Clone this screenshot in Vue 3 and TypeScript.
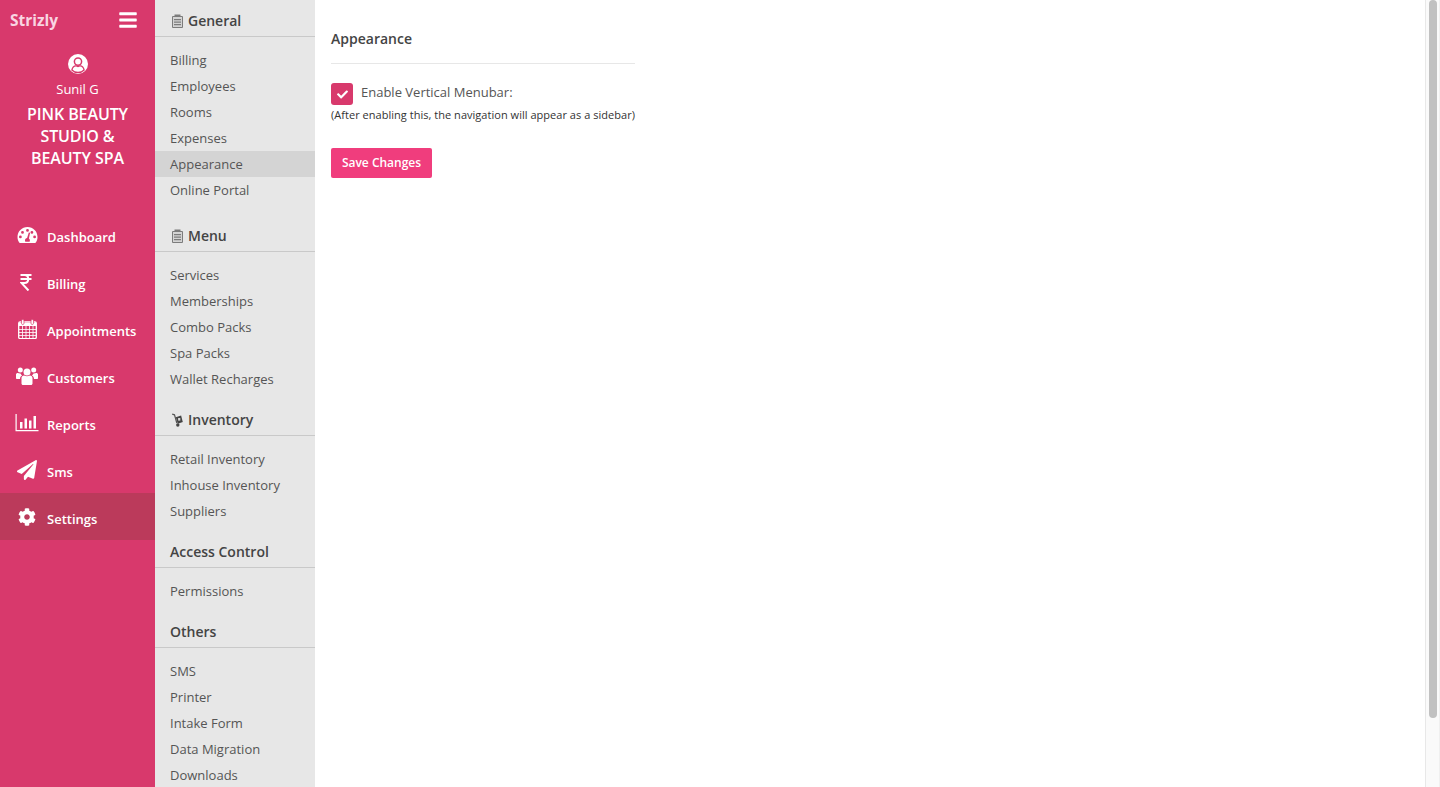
<script setup lang="ts">
// Пункты главного меню
const navItems = [
  { id: 'dashboard', label: 'Dashboard' },
  { id: 'billing', label: 'Billing' },
  { id: 'appointments', label: 'Appointments' },
  { id: 'customers', label: 'Customers' },
  { id: 'reports', label: 'Reports' },
  { id: 'sms', label: 'Sms' },
  { id: 'settings', label: 'Settings', active: true },
]

// Разделы настроек
const sections = [
  { title: 'General', icon: 'clipboard', tall: true, items: ['Billing', 'Employees', 'Rooms', 'Expenses', 'Appearance', 'Online Portal'] },
  { title: 'Menu', icon: 'clipboard', items: ['Services', 'Memberships', 'Combo Packs', 'Spa Packs', 'Wallet Recharges'] },
  { title: 'Inventory', icon: 'dolly', items: ['Retail Inventory', 'Inhouse Inventory', 'Suppliers'] },
  { title: 'Access Control', items: ['Permissions'] },
  { title: 'Others', items: ['SMS', 'Printer', 'Intake Form', 'Data Migration', 'Downloads'] },
]
</script>

<template>
  <div class="page">
    <aside class="sidebar">
      <div class="brand">
        <span class="logo">Strizly</span>
        <svg class="burger" viewBox="0 0 448 512" fill="currentColor"><path d="M16 132h416c8.837 0 16-7.163 16-16V76c0-8.837-7.163-16-16-16H16C7.163 60 0 67.163 0 76v40c0 8.837 7.163 16 16 16zm0 160h416c8.837 0 16-7.163 16-16v-40c0-8.837-7.163-16-16-16H16c-8.837 0-16 7.163-16 16v40c0 8.837 7.163 16 16 16zm0 160h416c8.837 0 16-7.163 16-16v-40c0-8.837-7.163-16-16-16H16c-8.837 0-16 7.163-16 16v40c0 8.837 7.163 16 16 16z" /></svg>
      </div>
      <div class="profile">
        <svg class="avatar" viewBox="0 0 20 20">
          <circle cx="10" cy="10" r="10" fill="#fff" />
          <circle cx="10" cy="7.6" r="3.6" fill="none" stroke="#d8396c" stroke-width="1.5" />
          <path d="M3.9 16c.6-3 2.6-4.2 3.9-4.2.8.5 1.4.7 2.2.7s1.400-.2 2.200-.7c1.300 0 3.300 1.200 3.900 4.200-1.500 1.600-3.700 2.500-6.100 2.500S5.400 17.600 3.900 16z" fill="none" stroke="#d8396c" stroke-width="1.300" />
        </svg>
        <div class="user-name">Sunil G</div>
        <div class="salon-name">PINK BEAUTY STUDIO &amp; BEAUTY SPA</div>
      </div>

      <nav class="main-nav">
        <a v-for="item in navItems" :key="item.id" class="nav-item" :class="{ active: item.active }">
          <span class="nav-icon">
            <svg v-if="item.id === 'dashboard'" width="21" height="18" viewBox="0 0 21 18">
              <path fill="#fff" fill-rule="evenodd" d="M10.500 1C4.900 1 .5 5.400.5 11c0 2 .5 3.800 1.500 5.300.2.400.6.700 1 .7h15c.4 0 .8-.3 1-.7 1-1.500 1.500-3.300 1.500-5.300 0-5.600-4.400-10-10-10zM10.500 3a1.400 1.400 0 1 1 0 2.800 1.400 1.400 0 0 1 0-2.800zM5.500 5a1.400 1.400 0 1 1 0 2.800 1.400 1.400 0 0 1 0-2.800zM3.400 9.500a1.400 1.400 0 1 1 0 2.800 1.400 1.400 0 0 1 0-2.800zM17.600 9.500a1.400 1.400 0 1 1 0 2.800 1.400 1.400 0 0 1 0-2.800zM14.900 5a1.400 1.400 0 1 1 0 2.800 1.400 1.400 0 0 1 0-2.800zM11.800 6.500l1.300.3-1.200 5.700c.6.400 1 1.100 1 1.900 0 .5-.1 1-.4 1.300H8.400c-.3-.3-.4-.8-.4-1.300 0-1.200.9-2.200 2.100-2.400z" />
            </svg>
            <svg v-else-if="item.id === 'billing'" class="rupee" width="12" height="18" viewBox="0 0 12 18">
              <path fill="none" stroke="#fff" stroke-width="2" d="M.5 2h11M.5 6h11M1 2h3.500c5 0 5 8 0 8H1.500l7 7.500" />
            </svg>
            <svg v-else-if="item.id === 'appointments'" width="19" height="20" viewBox="0 0 19 20">
              <path fill="none" stroke="#fff" stroke-width="1.300" d="M2 3h15a1.300 1.300 0 0 1 1.300 1.300v14a1.300 1.300 0 0 1-1.300 1.300H2A1.300 1.300 0 0 1 .7 18.300v-14A1.300 1.300 0 0 1 2 3z" />
              <path fill="#fff" d="M1 4h17v3H1z" />
              <path fill="none" stroke="#fff" stroke-width=".8" d="M1 10.500h17M1 13.500h17M1 16.500h17M4.500 7v12M8 7v12M11.500 7v12M15 7v12" />
              <rect x="3.500" y=".5" width="2.500" height="5" rx="1.200" fill="#fff" stroke="#d8396c" stroke-width=".7" />
              <rect x="13" y=".5" width="2.500" height="5" rx="1.200" fill="#fff" stroke="#d8396c" stroke-width=".7" />
            </svg>
            <svg v-else-if="item.id === 'customers'" width="22" height="18" viewBox="0 0 22 18" fill="#fff">
              <circle cx="11" cy="5" r="3.500" />
              <circle cx="4.300" cy="3" r="2.500" />
              <circle cx="17.700" cy="3" r="2.500" />
              <path d="M5.500 11c0-1.500 1.200-2.500 2.500-2.500.9.500 1.900.8 3 .8s2.100-.3 3-.8c1.300 0 2.500 1 2.500 2.500v5.500c0 .8-.7 1.500-1.500 1.500H7c-.8 0-1.500-.7-1.500-1.500z" />
              <path d="M0 7.500C0 6.500.9 6 1.800 6c.8.300 1.700.6 2.700.5.300.8.900 1.500 1.600 2C4.900 9 4 10.300 4 12H1c-.6 0-1-.4-1-1zM22 7.500c0-1-.9-1.500-1.800-1.500-.8.300-1.700.6-2.700.5-.3.800-.9 1.500-1.600 2 1.200.5 2.100 1.800 2.100 3.500h3c.6 0 1-.4 1-1z" />
            </svg>
            <svg v-else-if="item.id === 'reports'" width="24" height="18" viewBox="0 0 24 18" fill="#fff">
              <path d="M.5 0h1.200v16H23.500v1.200H.5z" />
              <rect x="5" y="8" width="2.500" height="6.500" />
              <rect x="9.500" y="4.500" width="2.500" height="10" />
              <rect x="14" y="6.500" width="2.500" height="8" />
              <rect x="18.500" y="2" width="2.500" height="12.500" />
            </svg>
            <svg v-else-if="item.id === 'sms'" width="20" height="20" viewBox="0 0 512 512" fill="#fff"><path d="M476 3.200L12.500 270.600c-18.100 10.400-15.800 35.600 2.200 43.200L121 358.400l287.300-253.200c5.500-4.900 13.300 2.600 8.600 8.300L176 407v80.500c0 23.600 28.500 32.900 42.500 15.800L282 426l124.600 52.200c14.200 6 30.400-2.900 33-18.200l72-432C515 7.800 493.300-6.800 476 3.200z" /></svg>
            <svg v-else width="18" height="18" viewBox="0 0 512 512" fill="#fff"><path d="M487.400 315.700l-42.600-24.600c4.300-23.200 4.300-47 0-70.200l42.600-24.600c4.900-2.800 7.100-8.600 5.500-14-11.100-35.600-30-67.800-54.700-94.600-3.800-4.100-10-5.100-14.800-2.300L380.800 110c-17.900-15.400-38.500-27.300-60.800-35.100V25.800c0-5.600-3.900-10.500-9.400-11.700-36.700-8.200-74.300-7.800-109.200 0-5.500 1.200-9.400 6.100-9.400 11.700V75c-22.200 7.900-42.800 19.800-60.800 35.100L88.700 85.500c-4.900-2.800-11-1.900-14.800 2.300-24.700 26.700-43.600 58.900-54.700 94.600-1.700 5.400.6 11.200 5.500 14L67.300 221c-4.300 23.200-4.300 47 0 70.200l-42.600 24.600c-4.900 2.800-7.100 8.600-5.500 14 11.100 35.600 30 67.800 54.700 94.600 3.800 4.100 10 5.100 14.800 2.300l42.600-24.600c17.900 15.400 38.500 27.300 60.800 35.100v49.200c0 5.600 3.900 10.500 9.400 11.700 36.700 8.200 74.300 7.800 109.200 0 5.500-1.200 9.400-6.100 9.400-11.700v-49.200c22.200-7.900 42.800-19.800 60.800-35.100l42.600 24.600c4.900 2.800 11 1.900 14.800-2.300 24.700-26.700 43.600-58.900 54.700-94.600 1.500-5.500-.7-11.300-5.600-14.100zM256 336c-44.100 0-80-35.900-80-80s35.900-80 80-80 80 35.900 80 80-35.900 80-80 80z" /></svg>
          </span>
          <span>{{ item.label }}</span>
        </a>
      </nav>
    </aside>

    <div class="settings-nav">
      <section v-for="section in sections" :key="section.title" class="group" :class="{ tall: section.tall }">
        <h3 class="group-title">
          <svg v-if="section.icon === 'clipboard'" class="group-icon" width="11" height="14" viewBox="0 0 11 14">
            <path fill="#d4d4d4" stroke="#7c7c7c" stroke-width="1" d="M.5 2.500h10v11H.5z" />
            <path fill="#7c7c7c" d="M2.500 .5h6v2.500h-6zM2 5h7v1.200H2zM2 7.500h7v1.200H2zM2 10h7v1.200H2z" />
          </svg>
          <svg v-else-if="section.icon === 'dolly'" class="group-icon" width="11" height="14" viewBox="0 0 11 14">
            <path fill="none" stroke="#555" stroke-width="1.200" d="M.2 1.200l2.300.6 2.300 8.200" />
            <path fill="#444" d="M3.800 4.300l5.300-1.800 1.700 6.500-5 1.700z" />
            <rect x="6.100" y="5" width="2.200" height="2.600" fill="#d8d8d8" />
            <circle cx="5.800" cy="12" r="1.700" fill="#444" />
          </svg>
          <span>{{ section.title }}</span>
        </h3>
        <ul class="group-list">
          <li v-for="name in section.items" :key="name" class="group-item" :class="{ current: name === 'Appearance' }">{{ name }}</li>
        </ul>
      </section>
    </div>

    <main class="content">
      <div class="panel">
        <h2 class="panel-title">Appearance</h2>
        <div class="check-row">
          <span class="checkbox">
            <svg width="11" height="11" viewBox="0 0 512 512" fill="#fff"><path d="M173.898 439.404l-166.400-166.400c-9.997-9.997-9.997-26.206 0-36.204l36.203-36.204c9.997-9.998 26.207-9.998 36.204 0L192 312.690 432.095 72.596c9.997-9.997 26.207-9.997 36.204 0l36.203 36.204c9.997 9.997 9.997 26.206 0 36.204l-294.400 294.401c-9.998 9.997-26.207 9.997-36.204-.001z" /></svg>
          </span>
          <label class="check-label">Enable Vertical Menubar:</label>
        </div>
        <p class="note">(After enabling this, the navigation will appear as a sidebar)</p>
        <button class="save-btn">Save Changes</button>
      </div>
    </main>

    <div class="scrollbar"><div class="thumb"></div></div>
  </div>
</template>

<style scoped>
.page {
  display: flex;
  height: 787px;
  overflow: hidden;
  font-family: "Open Sans", sans-serif;
  background: #fff;
  color: #444;
}

/* Левая колонка */
.sidebar {
  width: 155px;
  flex-shrink: 0;
  background: #d8396c;
  color: #fff;
}

.brand {
  display: flex;
  align-items: center;
  justify-content: space-between;
  height: 40px;
  padding: 0 18px 0 10px;
}

.logo {
  font-size: 15.5px;
  font-weight: 700;
  color: #f9d5e2;
}

.burger {
  width: 18px;
  height: 20px;
  color: #fff;
}

.profile {
  display: flex;
  flex-direction: column;
  align-items: center;
  padding-top: 14px;
  text-align: center;
}

.avatar {
  width: 20px;
  height: 20px;
}

.user-name {
  margin-top: 6px;
  font-size: 13px;
  line-height: 18px;
}

.salon-name {
  width: 120px;
  margin-top: 5px;
  font-size: 16px;
  font-weight: 600;
  line-height: 22px;
  letter-spacing: -0.1px;
}

.main-nav {
  margin-top: 42px;
}

.nav-item {
  display: flex;
  align-items: center;
  box-sizing: border-box;
  height: 47px;
  padding-left: 15px;
  padding-top: 4px;
  font-size: 13px;
  font-weight: 600;
}

.nav-item.active {
  background: #bb3a5b;
}

.nav-icon {
  display: flex;
  justify-content: center;
  width: 24px;
  margin-right: 8px;
  margin-top: -3px;
}

.rupee {
  margin-left: -2px;
}

/* Колонка настроек */
.settings-nav {
  width: 160px;
  flex-shrink: 0;
  background: #e7e7e7;
  overflow: hidden;
}

.group {
  margin-bottom: 7px;
}

.group.tall {
  margin-bottom: 12px;
}

.group-title {
  display: flex;
  align-items: center;
  height: 37px;
  margin: 0;
  padding: 5px 15px 0;
  box-sizing: border-box;
  border-bottom: 1px solid #c9c9c9;
  font-size: 14px;
  font-weight: 600;
  color: #444;
}

.group-icon {
  margin-right: 5px;
  margin-left: 2px;
}

.group-list {
  list-style: none;
  margin: 0;
  padding: 10px 0 0;
}

.group-item {
  height: 26px;
  padding-left: 15px;
  font-size: 13px;
  line-height: 26px;
  color: #555;
}

.group-item.current {
  background: #d4d4d4;
}

/* Основная часть */
.content {
  flex: 1;
  padding: 27px 16px;
}

.panel {
  display: inline-block;
  width: 304px;
}

.panel-title {
  margin: 0 0 19px;
  padding-bottom: 13px;
  border-bottom: 1px solid #e7e7e7;
  font-size: 14px;
  font-weight: 600;
  line-height: 23px;
  color: #444;
}

.check-row {
  display: flex;
  align-items: center;
  gap: 8px;
}

.checkbox {
  display: flex;
  align-items: center;
  justify-content: center;
  width: 22px;
  height: 22px;
  border-radius: 3px;
  background: #d8396c;
}

.check-label {
  margin-top: -5px;
  font-size: 13px;
  color: #555;
}

.note {
  margin: 0;
  font-size: 11px;
  line-height: 20px;
  letter-spacing: 0.03px;
  white-space: nowrap;
  color: #333;
}

.save-btn {
  display: block;
  width: 101px;
  height: 30px;
  margin-top: 23px;
  padding: 0 0 2px;
  border: 0;
  border-radius: 2px;
  background: #f03d7d;
  color: #fff;
  font-family: inherit;
  font-size: 12px;
  font-weight: 600;
}

/* Полоса прокрутки */
.scrollbar {
  width: 15px;
  box-sizing: border-box;
  flex-shrink: 0;
  padding: 0 2px 0 3px;
  background: #fafafa;
  border-left: 1px solid #e8e8e8;
  border-right: 1px solid #f0f0f0;
}

.thumb {
  width: 8px;
  height: 718px;
  border-radius: 4px;
  background: #c1c1c1;
}
</style>
